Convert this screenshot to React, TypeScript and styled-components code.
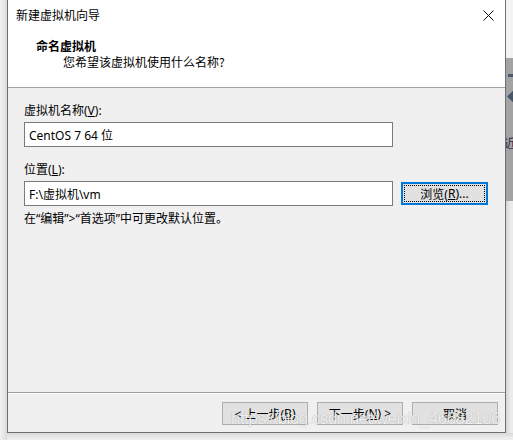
import React from "react";
import styled, { createGlobalStyle } from "styled-components";

const Global = createGlobalStyle`
  html, body { margin: 0; padding: 0; }
  body {
    width: 513px; height: 440px; overflow: hidden;
    background: #ececec;
    font-family: "Segoe UI", "Noto Sans", "Noto Sans CJK SC", sans-serif;
    font-size: 12px; color: #000;
  }
`;

const Page = styled.div`
  width: 513px;
  height: 440px;
  display: grid;
  grid-template-columns: 7px 499px 7px;
  grid-template-rows: 433px 7px;
  position: relative;
  overflow: hidden;
`;

const LeftShade = styled.div`
  grid-column: 1;
  grid-row: 1 / 3;
  background: linear-gradient(to right, #f1f1f1, #e4e4e4 70%, #d6d6d6);
`;

const RightStrip = styled.div`
  grid-column: 3;
  grid-row: 1;
  display: flex;
  flex-direction: column;
  background: linear-gradient(to right, #d4d4d4, #ebebeb 60%);
`;

const StripTop = styled.div`
  height: 58px;
  background: #f3f3f3;
`;

const StripGray = styled.div`
  height: 127px;
  background: #a3a3a3;
  display: flex;
  flex-direction: column;
  padding: 16px 0 0 2px;
  gap: 15px;
  overflow: hidden;
`;

const StripDash = styled.div`
  width: 8px;
  height: 3px;
  background: #4a5868;
`;

const StripDiamond = styled.div`
  width: 9px;
  height: 9px;
  margin-left: 1px;
  background: #475667;
  transform: rotate(45deg);
`;

const StripGlyph = styled.div`
  margin-top: 20px;
  margin-left: -4px;
  font-size: 12px;
  line-height: 14px;
  color: #3a2a4a;
  font-family: "Noto Sans CJK SC", sans-serif;
`;

const BottomShade = styled.div`
  grid-column: 2 / 4;
  grid-row: 2;
  background: linear-gradient(to bottom, #d9d9d9, #efefef 80%);
`;

const Window = styled.div`
  grid-column: 2;
  grid-row: 1;
  box-sizing: border-box;
  border: 1px solid #6f6f6f;
  border-top: none;
  display: flex;
  flex-direction: column;
  background: #f0f0f0;
  min-width: 0;
`;

const TitleBar = styled.div`
  height: 30px;
  flex: none;
  background: #fff;
  display: flex;
  align-items: center;
  justify-content: space-between;
  padding: 0 11px 0 8px;
`;

const TitleText = styled.span`
  font-family: "Noto Sans CJK SC", sans-serif;
  font-size: 12px;
  line-height: 16px;
`;

const Header = styled.div`
  background: #fff;
  height: 58px;
  flex: none;
  box-sizing: border-box;
  padding: 8px 0 0 28px;
  border-bottom: 1px solid #a0a0a0;
  display: flex;
  flex-direction: column;
`;

const HeaderTitle = styled.div`
  font-family: "Noto Sans CJK SC", sans-serif;
  font-weight: 700;
  font-size: 12px;
  line-height: 16px;
`;

const HeaderSub = styled.div`
  font-family: "Noto Sans CJK SC", sans-serif;
  font-size: 12px;
  line-height: 16px;
  padding-left: 27px;
`;

const Body = styled.div`
  flex: 1;
  padding: 15px 0 0 16px;
  display: flex;
  flex-direction: column;
`;

const Label = styled.div<{ $top?: number }>`
  font-family: "Segoe UI", "Noto Sans", "Noto Sans CJK SC", sans-serif;
  font-size: 12px;
  line-height: 16px;
  margin-top: ${(p) => p.$top ?? 0}px;
  margin-bottom: 3px;
`;

const Row = styled.div`
  display: flex;
  align-items: center;
  gap: 8px;
`;

const TextBox = styled.div`
  box-sizing: border-box;
  width: 369px;
  height: 25px;
  border: 1px solid #7a7a7a;
  background: #fff;
  padding: 0 4px;
  display: flex;
  align-items: center;
  font-family: "Segoe UI", "Noto Sans", "Noto Sans CJK SC", sans-serif;
  font-size: 12px;
`;

const Hint = styled.div`
  margin-top: 5px;
  font-family: "Noto Sans", "Noto Sans CJK SC", sans-serif;
  font-size: 12px;
  line-height: 16px;
`;

const Button = styled.div<{ $focused?: boolean }>`
  box-sizing: border-box;
  width: ${(p) => (p.$focused ? 87 : 86)}px;
  height: 23px;
  background: #e1e1e1;
  border: ${(p) => (p.$focused ? "2px solid #0078d7" : "1px solid #adadad")};
  display: flex;
  align-items: center;
  justify-content: center;
  font-family: "Segoe UI", "Noto Sans", "Noto Sans CJK SC", sans-serif;
  font-size: 12px;
  padding: ${(p) => (p.$focused ? "1px" : "0")};
`;

const FocusRect = styled.div`
  box-sizing: border-box;
  width: 100%;
  height: 100%;
  border: 1px dotted #000;
  display: flex;
  align-items: center;
  justify-content: center;
`;

const Footer = styled.div`
  flex: none;
  border-top: 1px solid #a0a0a0;
  box-shadow: inset 0 1px 0 #fff;
  padding: 9px 7px 7px 0;
  display: flex;
  justify-content: flex-end;
  gap: 9px;
`;

const Watermark = styled.div`
  position: absolute;
  left: 231px;
  top: 409px;
  font-family: "Liberation Sans", Arial, sans-serif;
  font-size: 17px;
  letter-spacing: -0.55px;
  line-height: 20px;
  color: rgba(255, 255, 255, 0.85);
  text-shadow: 0 0 1px rgba(0, 0, 0, 0.35);
  pointer-events: none;
  white-space: nowrap;
`;

const CloseIcon = () => (
  <svg width="11" height="11" viewBox="0 0 11 11">
    <path d="M0.5 0.5 L10.5 10.5 M10.5 0.5 L0.5 10.5" stroke="#111" strokeWidth="1" fill="none" />
  </svg>
);

export default function App() {
  return (
    <>
      <Global />
      <Page>
        <LeftShade />
        <Window>
          <TitleBar>
            <TitleText>新建虚拟机向导</TitleText>
            <CloseIcon />
          </TitleBar>
          <Header>
            <HeaderTitle>命名虚拟机</HeaderTitle>
            <HeaderSub>您希望该虚拟机使用什么名称?</HeaderSub>
          </Header>
          <Body>
            <Label>
              虚拟机名称(<u>V</u>):
            </Label>
            <TextBox>CentOS 7 64 位</TextBox>
            <Label $top={15}>
              位置(<u>L</u>):
            </Label>
            <Row>
              <TextBox>F:\虚拟机\vm</TextBox>
              <Button $focused>
                <FocusRect>
                  浏览(<u>R</u>)...
                </FocusRect>
              </Button>
            </Row>
            <Hint>在“编辑”&gt;“首选项”中可更改默认位置。</Hint>
          </Body>
          <Footer>
            <Button>
              &lt; 上一步(<u>B</u>)
            </Button>
            <Button>
              下一步(<u>N</u>) &gt;
            </Button>
            <Button>取消</Button>
          </Footer>
        </Window>
        <RightStrip>
          <StripTop />
          <StripGray>
            <StripDash />
            <StripDiamond />
            <StripGlyph>近</StripGlyph>
          </StripGray>
        </RightStrip>
        <BottomShade />
        <Watermark>https://blog.csdn.net/weixin_46682106</Watermark>
      </Page>
    </>
  );
}
